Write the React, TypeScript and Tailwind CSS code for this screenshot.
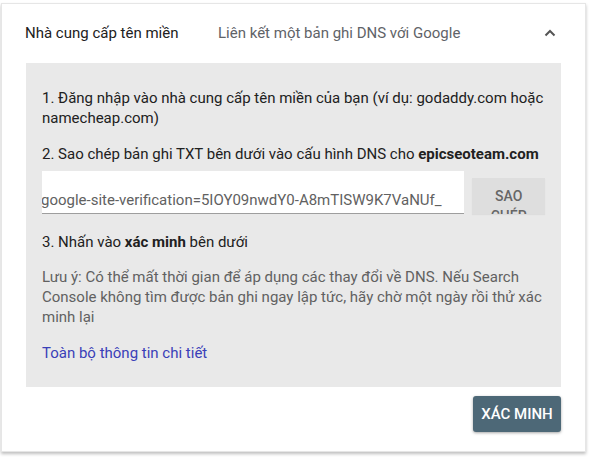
import React from "react";

export default function App() {
  return (
    <div className="w-[597px] h-[457px] bg-white overflow-hidden" style={{ fontFamily: "Roboto, 'Noto Sans', sans-serif" }}>
      <div className="ml-[1px] mt-[3px] w-[585px] h-[449px] bg-white border border-[#e6e6e6] shadow-[0_2px_3px_rgba(0,0,0,0.25)] flex flex-col">
        <div className="h-[59px] flex items-center pl-[23px] pr-[28px] text-[15px]">
          <div className="w-[193px] text-[#212121]">Nhà cung cấp tên miền</div>
          <div className="flex-1 text-[#5f6368]">Liên kết một bản ghi DNS với Google</div>
          <svg width="14" height="10" viewBox="0 0 14 10" className="mt-[-2px]">
            <path d="M2.5 7.5 L7 3 L11.5 7.5" fill="none" stroke="#555" strokeWidth="2" />
          </svg>
        </div>
        <div className="mx-[24px] bg-[#e9e9e9] pt-[25px] pb-[24px] pl-[16px] pr-[16px] text-[15px] leading-[20px] text-[#212121]">
          <p>1. Đăng nhập vào nhà cung cấp tên miền của bạn (ví dụ: godaddy.com hoặc namecheap.com)</p>
          <p className="mt-[16px]">
            2. Sao chép bản ghi TXT bên dưới vào cấu hình DNS cho <b className="font-bold">epicseoteam.com</b>
          </p>
          <div className="mt-[7px] flex items-start">
            <div className="w-[424px] h-[43px] bg-white border-b border-[#9e9e9e] flex items-end pb-[3px] overflow-hidden">
              <span className="whitespace-nowrap text-[#616161] text-[15px] -ml-[1px]">google-site-verification=5IOY09nwdY0-A8mTISW9K7VaNUf_</span>
            </div>
            <div className="ml-[8px] mt-[7px] w-[73px] h-[36px] bg-[#dedede] overflow-hidden shadow-[0_1px_1px_rgba(0,0,0,0.05)]">
              <div className="text-center text-[14px] font-medium text-[#666666] leading-[20px] pt-[8px] px-[10px]">SAO CHÉP</div>
            </div>
          </div>
          <p className="mt-[18px]">
            3. Nhấn vào <b className="font-bold">xác minh</b> bên dưới
          </p>
          <p className="mt-[15px] text-[#616161]">
            Lưu ý: Có thể mất thời gian để áp dụng các thay đổi về DNS. Nếu Search Console không tìm được bản ghi ngay lập tức, hãy chờ một ngày rồi thử xác minh lại
          </p>
          <p className="mt-[16px] text-[#3a40b8]">Toàn bộ thông tin chi tiết</p>
        </div>
        <div className="flex justify-end pr-[24px] mt-[9px]">
          <button className="w-[88px] h-[36px] bg-[#4d6877] text-white text-[15px] font-medium rounded-[3px] shadow-[0_1px_3px_rgba(0,0,0,0.35)]">
            XÁC MINH
          </button>
        </div>
      </div>
    </div>
  );
}
